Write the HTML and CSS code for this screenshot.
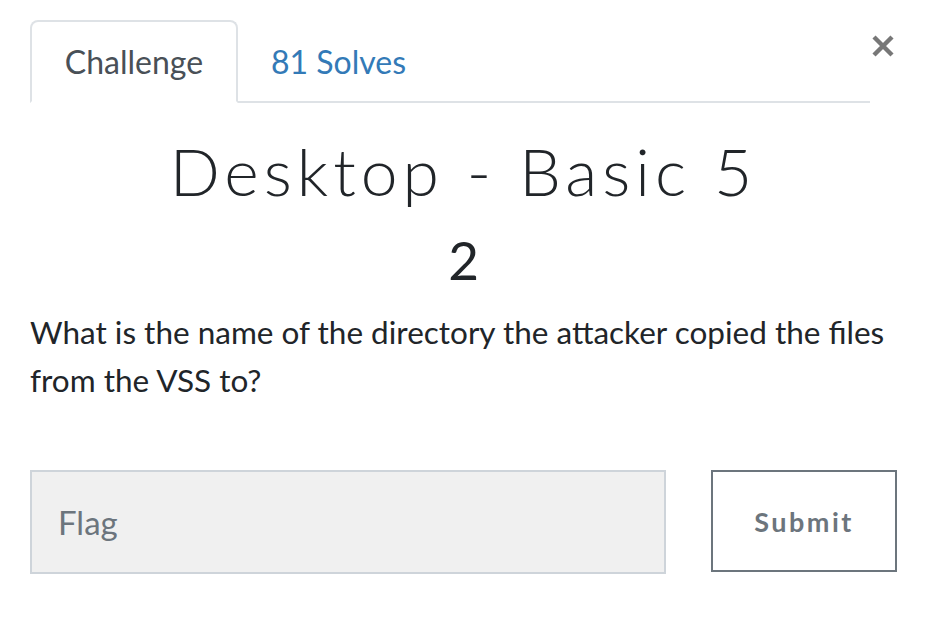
FILE: index.html
```html
<!DOCTYPE html>
<html>
<head>
<meta charset="utf-8">
<link rel="stylesheet" href="styles.css">
</head>
<body>
<div class="modal">
  <div class="header">
    <ul class="tabs">
      <li class="tab active">Challenge</li>
      <li class="tab link">81 Solves</li>
    </ul>
    <button class="close" aria-label="Close">
      <svg width="24" height="24" viewBox="0 0 24 24"><path d="M3 3 L21 21 M21 3 L3 21" stroke="#777" stroke-width="4.4" stroke-linecap="butt"/></svg>
    </button>
  </div>
  <h1 class="title">Desktop - Basic 5</h1>
  <div class="value">2</div>
  <p class="desc">What is the name of the directory the attacker copied the files from the VSS to?</p>
  <form class="flag-row">
    <input class="flag" type="text" placeholder="Flag">
    <button class="submit" type="button">Submit</button>
  </form>
</div>
</body>
</html>
```

FILE: styles.css
```css
html, body {
  margin: 0;
  padding: 0;
  background: #fff;
}
body {
  font-family: Lato, "Noto Sans", sans-serif;
  color: #212529;
}
.modal {
  width: 867px;
  padding: 20px 0 0 30px;
}
.header {
  display: flex;
  align-items: flex-start;
}
.tabs {
  flex: 1;
  display: flex;
  list-style: none;
  margin: 0;
  padding: 0;
  border-bottom: 2px solid #dee2e6;
  height: 81px;
}
.tab {
  font-size: 32px;
  line-height: 83px;
  box-sizing: border-box;
  height: 83px;
}
.tab.active {
  color: #495057;
  border: 2px solid #dee2e6;
  border-bottom-color: #fff;
  border-radius: 8px 8px 0 0;
  width: 208px;
  text-align: center;
  line-height: 79px;
}
.tab.link {
  color: #337ab7;
  padding-left: 33px;
}
.close {
  background: none;
  border: 0;
  padding: 0;
  margin: 13px 1px 0 0;
  width: 26px;
  height: 26px;
  display: flex;
  align-items: center;
  justify-content: center;
}
.title {
  font-family: Lato, sans-serif;
  font-weight: 300;
  font-size: 66px;
  letter-spacing: 5px;
  text-align: center;
  margin: 28px 0 0;
  line-height: 80px;
  color: #212529;
}
.value {
  text-align: center;
  font-size: 53px;
  font-weight: 400;
  line-height: 70px;
  margin-top: 14px;
}
.desc {
  font-size: 31.5px;
  line-height: 48px;
  margin: 13px 0 0;
}
.flag-row {
  display: flex;
  justify-content: space-between;
  margin-top: 66px;
}
.flag {
  width: 636px;
  height: 104px;
  box-sizing: border-box;
  background: #f0f0f0;
  border: 2px solid #ced4da;
  font-family: Lato, sans-serif;
  font-size: 33px;
  padding: 0 26px;
  color: #495057;
}
.flag::placeholder {
  color: #6c757d;
}
.submit {
  width: 186px;
  height: 102px;
  box-sizing: border-box;
  background: #fff;
  border: 2px solid #6c757d;
  color: #6c757d;
  font-family: Lato, sans-serif;
  font-weight: 700;
  font-size: 27px;
  letter-spacing: 2.5px;
}
```
